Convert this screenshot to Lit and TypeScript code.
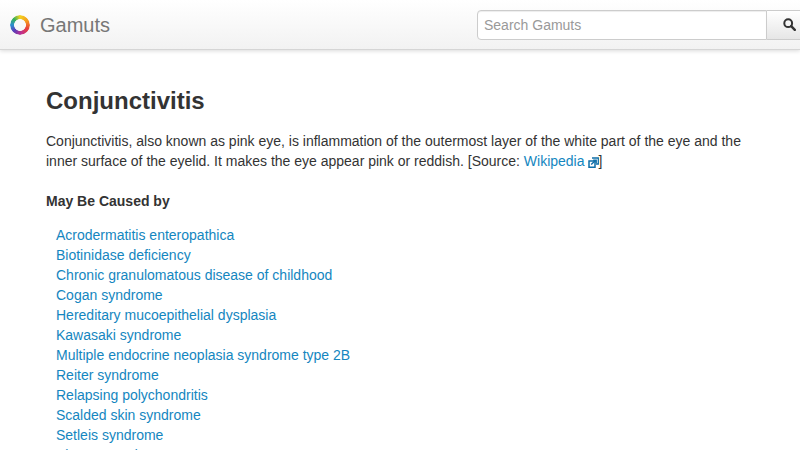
import { LitElement, html, css } from "lit";
import { customElement } from "lit/decorators.js";

const LINKS = [
  "Acrodermatitis enteropathica",
  "Biotinidase deficiency",
  "Chronic granulomatous disease of childhood",
  "Cogan syndrome",
  "Hereditary mucoepithelial dysplasia",
  "Kawasaki syndrome",
  "Multiple endocrine neoplasia syndrome type 2B",
  "Reiter syndrome",
  "Relapsing polychondritis",
  "Scalded skin syndrome",
  "Setleis syndrome",
  "Sjogren syndrome",
];

@customElement("app-root")
export class AppRoot extends LitElement {
  static styles = css`
    :host {
      display: block;
      width: 800px;
      height: 450px;
      overflow: hidden;
      background: #fff;
      font-family: "Liberation Sans", Arial, sans-serif;
      font-size: 14px;
      line-height: 20px;
      color: #333;
    }
    .nav {
      height: 49px;
      display: flex;
      align-items: center;
      background: linear-gradient(to bottom, #ffffff, #f2f2f2);
      border-bottom: 1px solid #d5d5d5;
      box-shadow: 0 1px 4px rgba(0, 0, 0, 0.15);
      padding-left: 10px;
    }
    .logo {
      width: 20px;
      height: 20px;
      margin-right: 10px;
      border-radius: 50%;
      background: conic-gradient(
        #f2d21f 0deg,
        #f59a1f 60deg,
        #e8403a 115deg,
        #c02f8f 170deg,
        #5a3db8 225deg,
        #2a8fd0 270deg,
        #35b05a 315deg,
        #f2d21f 360deg
      );
      -webkit-mask: radial-gradient(circle, transparent 5.6px, #000 6.2px);
      mask: radial-gradient(circle, transparent 5.6px, #000 6.2px);
    }
    .brand {
      font-size: 20px;
      color: #777;
      flex: 1;
    }
    .search {
      display: flex;
      height: 30px;
      margin-right: -28px;
    }
    .input {
      width: 290px;
      height: 30px;
      box-sizing: border-box;
      border: 1px solid #ccc;
      border-radius: 4px 0 0 4px;
      background: #fff;
      padding: 0 6px;
      line-height: 28px;
      color: #999;
      font-size: 14px;
      box-shadow: inset 0 1px 1px rgba(0, 0, 0, 0.075);
    }
    .btn {
      width: 61px;
      height: 30px;
      box-sizing: border-box;
      border: 1px solid #ccc;
      border-left: 0;
      background: linear-gradient(to bottom, #fff, #e6e6e6);
      padding-left: 16px;
      display: flex;
      align-items: center;
    }
    .main {
      padding: 34px 46px 0;
    }
    h1 {
      margin: 0 0 14px;
      font-size: 24px;
      line-height: 33px;
      font-weight: 700;
    }
    p {
      margin: 0 0 20px;
    }
    a {
      color: #1486c0;
      text-decoration: none;
    }
    .ext {
      display: inline-block;
      width: 11px;
      height: 11px;
      margin-left: 3px;
      vertical-align: -2px;
      line-height: 0;
    }
    h2 {
      margin: 0 0 14px;
      font-size: 14px;
      line-height: 20px;
      font-weight: 700;
    }
    ul {
      margin: 0;
      padding: 0 0 0 10px;
      list-style: none;
    }
  `;

  render() {
    return html`
      <div class="nav">
        <div class="logo"></div>
        <div class="brand">Gamuts</div>
        <div class="search">
          <div class="input">Search Gamuts</div>
          <div class="btn">
            <svg width="13" height="13" viewBox="0 0 13 13">
              <circle cx="5.2" cy="5.2" r="3.9" fill="none" stroke="#333" stroke-width="2"></circle>
              <path d="M8.2 8.2 L11.8 11.8" stroke="#333" stroke-width="2.4" stroke-linecap="round"></path>
            </svg>
          </div>
        </div>
      </div>
      <div class="main">
        <h1>Conjunctivitis</h1>
        <p>
          Conjunctivitis, also known as pink eye, is inflammation of the outermost layer of the white part of the eye and the
          inner surface of the eyelid. It makes the eye appear pink or reddish. [Source: <a href="#">Wikipedia<svg class="ext" viewBox="0 0 11 11">
            <path d="M1 4h6v6.2H1z" fill="none" stroke="#0f6fa8" stroke-width="1.5"></path>
            <path d="M4 1h6.3v6H8" fill="none" stroke="#0f6fa8" stroke-width="1.3"></path>
            <path d="M3.2 7.6 7.4 3.4M5.2 3.2h3v3" fill="none" stroke="#0f6fa8" stroke-width="1.4"></path>
          </svg></a>]
        </p>
        <h2>May Be Caused by</h2>
        <ul>
          ${LINKS.map((l) => html`<li><a href="#">${l}</a></li>`)}
        </ul>
      </div>
    `;
  }
}
